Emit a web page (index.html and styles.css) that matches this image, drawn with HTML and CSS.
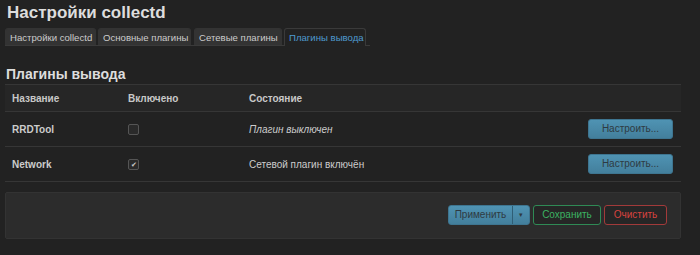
FILE: index.html
```html
<!DOCTYPE html>
<html>
  <head>
    <title>Настройки collectd</title>
    <link rel="stylesheet" href="styles.css">
  </head>
  <body>
    <h2 class="title">Настройки collectd</h2>
    <ul class="tabs">
      <li class="tab t1">Настройки collectd</li>
      <li class="tab t2">Основные плагины</li>
      <li class="tab t3">Сетевые плагины</li>
      <li class="tab t4 active">Плагины вывода</li>
    </ul>

    <h3 class="section">Плагины вывода</h3>
    <table class="grid">
      <tr class="head">
        <th class="c1">Название</th>
        <th class="c2">Включено</th>
        <th class="c3">Состояние</th>
        <th></th>
      </tr>
      <tr>
        <td class="c1 name">RRDTool</td>
        <td class="c2"><span class="check"></span></td>
        <td class="c3 off">Плагин выключен</td>
        <td class="act"><span class="btn blue">Настроить...</span></td>
      </tr>
      <tr>
        <td class="c1 name">Network</td>
        <td class="c2"><span class="check on">&#10004;</span></td>
        <td class="c3">Сетевой плагин включён</td>
        <td class="act"><span class="btn blue">Настроить...</span></td>
      </tr>
    </table>

    <div class="actions">
      <span class="btn blue split"><span class="main">Применить</span><span class="drop">&#9662;</span></span>
      <span class="btn green">Сохранить</span>
      <span class="btn red">Очистить</span>
    </div>
  </body>
</html>
```

FILE: styles.css
```css
body {
  margin: 0;
  padding: 0 19px 0 5px;
  background: #222;
  color: #ccc;
  font-family: "Liberation Sans", Arial, sans-serif;
  font-size: 10px;
}
.title {
  margin: 0;
  padding: 3px 0 0 2px;
  height: 25px;
  font-size: 17px;
  font-weight: bold;
  color: #ddd;
}
.tabs {
  display: inline-flex;
  margin: 0;
  padding: 0 4px 0 0;
  list-style: none;
  border-bottom: 1px solid #3a3a3a;
  white-space: nowrap;
}
.tab {
  box-sizing: border-box;
  padding: 4px 0 0 4px;
  height: 17px;
  line-height: 10px;
  font-size: 9.6px;
  background: #333;
  border: 1px solid #333;
  border-bottom: none;
  border-radius: 3px 3px 0 0;
  color: #ccc;
  overflow: hidden;
}
.t1 { width: 91px; margin-right: 2px; }
.t2 { width: 93px; margin-right: 3px; }
.t3 { width: 88px; margin-right: 2px; }
.t4 { width: 82px; }
.tab.active {
  background: #222;
  border-color: #3a3a3a;
  color: #4e9ad0;
  margin-bottom: -1px;
  height: 18px;
}
.section {
  margin: 20px 0 0 1px;
  height: 18px;
  font-size: 14px;
  font-weight: bold;
  color: #ddd;
}
.grid {
  width: 100%;
  border-collapse: collapse;
}
.grid th, .grid td {
  text-align: left;
  padding: 0;
  border-top: 1px solid #363636;
  border-bottom: 1px solid #363636;
}
.head th {
  height: 26px;
  background: #262626;
  font-weight: bold;
  color: #c8c8c8;
}
.grid td {
  height: 34px;
}
.c1 { width: 116px; padding-left: 7px !important; }
.c2 { width: 121px; }
.name { font-weight: bold; }
.off { font-style: italic; }
.act { text-align: right !important; padding-right: 8px !important; }
.check {
  display: inline-block;
  width: 9px;
  height: 9px;
  border: 1px solid #555;
  border-radius: 2px;
  background: #2a2a2a;
  vertical-align: middle;
  font-size: 7px;
  line-height: 9px;
  text-align: center;
  color: #ccc;
}
.btn {
  display: inline-block;
  box-sizing: border-box;
  height: 20px;
  line-height: 18px;
  padding: 0 14px;
  border: 1px solid;
  border-radius: 3px;
  text-align: center;
}
.blue {
  background: linear-gradient(#4f93b3, #437f9c);
  border-color: #3e7590;
  color: #2e3a42;
}
.act .btn { width: 85px; padding: 0; }
.actions {
  display: flex;
  justify-content: flex-end;
  gap: 3px;
  margin-top: 10px;
  padding: 12px 13px 13px 0;
  background: #2c2c2c;
  border: 1px solid #333;
  border-radius: 2px;
}
.split {
  display: flex;
  padding: 0;
  width: 82px;
}
.split .main {
  width: 63px;
  border-right: 1px solid #2f5e75;
}
.split .drop {
  flex: 1;
  font-size: 7px;
  color: #2e3a42;
}
.green {
  background: #262626;
  border-color: #2f8a55;
  color: #3cb262;
  width: 68px;
  padding: 0;
}
.red {
  background: #262626;
  border-color: #a23a3a;
  color: #d8433f;
  width: 63px;
  padding: 0;
}
```
